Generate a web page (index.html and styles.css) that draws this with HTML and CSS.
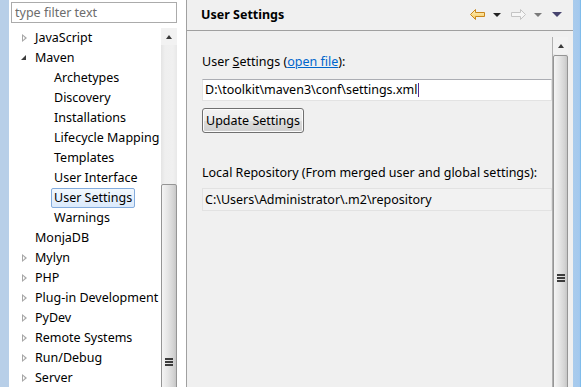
FILE: index.html
```html
<!DOCTYPE html>
<html>
    <head>
        <meta charset="utf-8">
        <title>Preferences - Maven User Settings</title>
        <link rel="stylesheet" href="styles.css">
    </head>
    <body>
        <div class="window">
            <div class="frame frame-left"></div>

            <aside class="nav">
                <div class="filter">
                    <input type="text" placeholder="type filter text">
                </div>
                <div class="tree-box">
                    <ul class="tree">
                        <li class="row"><span class="twisty closed"></span><span class="label">JavaScript</span></li>
                        <li class="row"><span class="twisty open"></span><span class="label">Maven</span></li>
                        <li class="row child"><span class="label">Archetypes</span></li>
                        <li class="row child"><span class="label">Discovery</span></li>
                        <li class="row child"><span class="label">Installations</span></li>
                        <li class="row child"><span class="label">Lifecycle Mapping</span></li>
                        <li class="row child"><span class="label">Templates</span></li>
                        <li class="row child"><span class="label">User Interface</span></li>
                        <li class="row child"><span class="label selected">User Settings</span></li>
                        <li class="row child"><span class="label">Warnings</span></li>
                        <li class="row"><span class="twisty"></span><span class="label">MonjaDB</span></li>
                        <li class="row"><span class="twisty closed"></span><span class="label">Mylyn</span></li>
                        <li class="row"><span class="twisty closed"></span><span class="label">PHP</span></li>
                        <li class="row"><span class="twisty closed"></span><span class="label">Plug-in Development</span></li>
                        <li class="row"><span class="twisty closed"></span><span class="label">PyDev</span></li>
                        <li class="row"><span class="twisty closed"></span><span class="label">Remote Systems</span></li>
                        <li class="row"><span class="twisty closed"></span><span class="label">Run/Debug</span></li>
                        <li class="row"><span class="twisty closed"></span><span class="label">Server</span></li>
                    </ul>
                    <div class="vscroll tree-scroll">
                        <div class="scroll-up"></div>
                        <div class="track">
                            <div class="thumb"><span class="grip"></span></div>
                        </div>
                    </div>
                </div>
            </aside>

            <main class="page">
                <header class="page-head">
                    <h1>User Settings</h1>
                    <div class="tools">
                        <svg width="15" height="11" viewBox="0 0 15 11">
                            <defs>
                                <linearGradient id="back-fill" x1="0" y1="0" x2="0" y2="1">
                                    <stop offset="0" stop-color="#fff3c4"/>
                                    <stop offset="1" stop-color="#f7c85a"/>
                                </linearGradient>
                            </defs>
                            <path d="M0.5 5.5 L5.5 0.5 V3.5 H14.5 V7.5 H5.5 V10.5 Z" fill="url(#back-fill)" stroke="#c8861c"/>
                        </svg>
                        <span class="drop dark"></span>
                        <svg width="15" height="11" viewBox="0 0 15 11" class="fwd">
                            <path d="M14.5 5.5 L9.5 0.5 V3.5 H0.5 V7.5 H9.5 V10.5 Z" fill="#f6f6f6" stroke="#c4c4c4"/>
                        </svg>
                        <span class="drop grey"></span>
                        <span class="drop menu"></span>
                    </div>
                </header>

                <div class="page-body">
                    <div class="form">
                        <div class="field-label">User <u>S</u>ettings (<a href="#">open file</a>):</div>
                        <div class="field">D:\toolkit\maven3\conf\settings.xml<span class="caret"></span></div>
                        <button type="button" class="btn">Update Settings</button>
                        <div class="field-label repo-label">Local Repository (From merged user and global settings):</div>
                        <div class="field readonly">C:\Users\Administrator\.m2\repository</div>
                    </div>
                    <div class="vscroll page-scroll">
                        <div class="scroll-up"></div>
                        <div class="track">
                            <div class="thumb"><span class="grip"></span></div>
                        </div>
                    </div>
                </div>
            </main>

            <div class="frame frame-right"></div>
        </div>
    </body>
</html>
```

FILE: styles.css
```css
* {
    box-sizing: border-box;
}

html {
    font-size: 12.5px;
    font-family: "Noto Sans", "Open Sans", sans-serif;
}

body {
    margin: 0;
    color: #000;
    background: #f0f0f0;
}

.window {
    display: flex;
    width: 581px;
    height: 387px;
    overflow: hidden;
}

/* window frame strips */
.frame {
    flex: none;
}

.frame-left {
    width: 9px;
    background: #b8cfe8;
}

.frame-right {
    width: 8px;
    background: linear-gradient(to right, #a9cbec, #a4c9ee 80%, #6fb6ea);
}

/* left navigation */
.nav {
    flex: none;
    width: 178px;
    background: #fff;
    border-right: 1px solid #a0a0a0;
    padding-top: 2px;
    display: flex;
    flex-direction: column;
}

.filter {
    padding-left: 2px;
}

.filter input {
    width: 166px;
    height: 21px;
    border: 1px solid #ababab;
    padding: 0 3px;
    font: inherit;
    color: #000;
}

.filter input::placeholder {
    color: #6d6d6d;
}

.tree-box {
    margin-top: 4px;
    flex: 1;
    display: flex;
    min-height: 0;
}

.tree {
    list-style: none;
    margin: 1px 0 0;
    padding: 0;
    width: 152px;
    overflow: hidden;
}

.row {
    height: 20px;
    display: flex;
    align-items: center;
    padding-left: 9px;
    white-space: nowrap;
}

.row.child {
    padding-left: 42px;
}

.twisty {
    width: 14px;
    height: 20px;
    flex: none;
    position: relative;
}

.twisty.closed::before {
    content: "";
    position: absolute;
    left: 4px;
    top: 6px;
    width: 0;
    height: 0;
    border-top: 4px solid transparent;
    border-bottom: 4px solid transparent;
    border-left: 5px solid #a6a6a6;
}

.twisty.closed::after {
    content: "";
    position: absolute;
    left: 5px;
    top: 8px;
    width: 0;
    height: 0;
    border-top: 2px solid transparent;
    border-bottom: 2px solid transparent;
    border-left: 2.5px solid #fff;
}

.twisty.open::before {
    content: "";
    position: absolute;
    left: 3px;
    top: 7px;
    width: 0;
    height: 0;
    border-left: 5px solid transparent;
    border-bottom: 5px solid #3c3c3c;
}

.label {
    display: inline-block;
    line-height: 18px;
    padding: 0 2px;
    border: 1px solid transparent;
    color: #000;
}

.label.selected {
    border-color: #84acdd;
    border-radius: 2px;
    background: linear-gradient(#f2f8fe, #dbeafc);
}

/* scroll bars */
.vscroll {
    flex: none;
    width: 16px;
    display: flex;
    flex-direction: column;
    background: linear-gradient(to right, #e4e4e4, #efefef 25%, #f0f0f0 75%, #e8e8e8);
}

.tree-scroll {
    margin-top: 1px;
}

.scroll-up {
    height: 17px;
    flex: none;
    position: relative;
    background: #f2f2f2;
}

.scroll-up::before {
    content: "";
    position: absolute;
    left: 5px;
    top: 7px;
    border-left: 3px solid transparent;
    border-right: 3px solid transparent;
    border-bottom: 4px solid #3a3a3a;
}

.track {
    flex: 1;
    position: relative;
    overflow: hidden;
}

.thumb {
    position: absolute;
    left: 0;
    right: 0;
    border: 1px solid #959595;
    border-radius: 2px;
    background: linear-gradient(to right, #f4f4f4, #e6e6e6 40%, #d4d4d4 80%, #c6c6c6);
    display: flex;
    align-items: center;
    justify-content: center;
}

.tree-scroll .thumb {
    top: 139px;
    height: 356px;
}

.page-scroll .thumb {
    top: 1px;
    height: 446px;
}

.grip {
    width: 8px;
    height: 9px;
    background: repeating-linear-gradient(#3c3c3c 0 2px, transparent 2px 3px);
}

/* right page */
.page {
    flex: none;
    width: 386px;
    display: flex;
    flex-direction: column;
    background: #f0f0f0;
}

.page-head {
    height: 31px;
    flex: none;
    display: flex;
    align-items: center;
    border-bottom: 1px solid #a0a0a0;
    padding: 0 11px 1px 14px;
}

.page-head h1 {
    margin: 0;
    flex: 1;
    font-size: 12.5px;
    font-weight: bold;
}

.tools {
    display: flex;
    align-items: center;
}

.tools svg {
    display: block;
}

.drop {
    width: 0;
    height: 0;
    border-left: 4px solid transparent;
    border-right: 4px solid transparent;
    border-top: 4px solid #222;
}

.drop.dark {
    margin: 0 10px 0 8px;
}

.drop.grey {
    border-top-color: #7a7a7a;
    margin: 0 9px 0 8px;
}

.drop.menu {
    border-left-width: 5px;
    border-right-width: 5px;
    border-top: 5px solid #46436e;
    margin-left: 1px;
}

.page-body {
    flex: 1;
    display: flex;
    min-height: 0;
}

.form {
    flex: 1;
    padding: 23px 0 0 15px;
    overflow: hidden;
}

.page-scroll {
    margin-top: 6px;
    margin-right: 5px;
    border-left: 1px solid #b0b0b0;
    width: 16px;
}

.field-label {
    line-height: 16px;
    white-space: nowrap;
}

.field-label a {
    color: #0066cc;
}

.field {
    margin-top: 9px;
    height: 22px;
    line-height: 20px;
    padding-left: 2px;
    background: #fff;
    border: 1px solid #e3e3e3;
    border-top-color: #abadb3;
    white-space: nowrap;
}

.caret {
    display: inline-block;
    width: 1px;
    height: 14px;
    margin-left: 1px;
    vertical-align: -3px;
    background: #5b2d8c;
}

.btn {
    display: block;
    margin-top: 7px;
    width: 102px;
    height: 25px;
    padding: 0;
    font: inherit;
    color: #000;
    border: 1px solid #707070;
    border-radius: 3px;
    background: linear-gradient(#f2f2f2, #ebebeb 50%, #dddddd 51%, #cfcfcf);
    box-shadow: inset 0 0 0 1px #fcfcfc;
}

.repo-label {
    margin-top: 32px;
}

.field.readonly {
    margin-top: 7px;
    height: 23px;
    line-height: 21px;
    background: #f2f2f2;
    border-color: #e2e2e2;
}
```
